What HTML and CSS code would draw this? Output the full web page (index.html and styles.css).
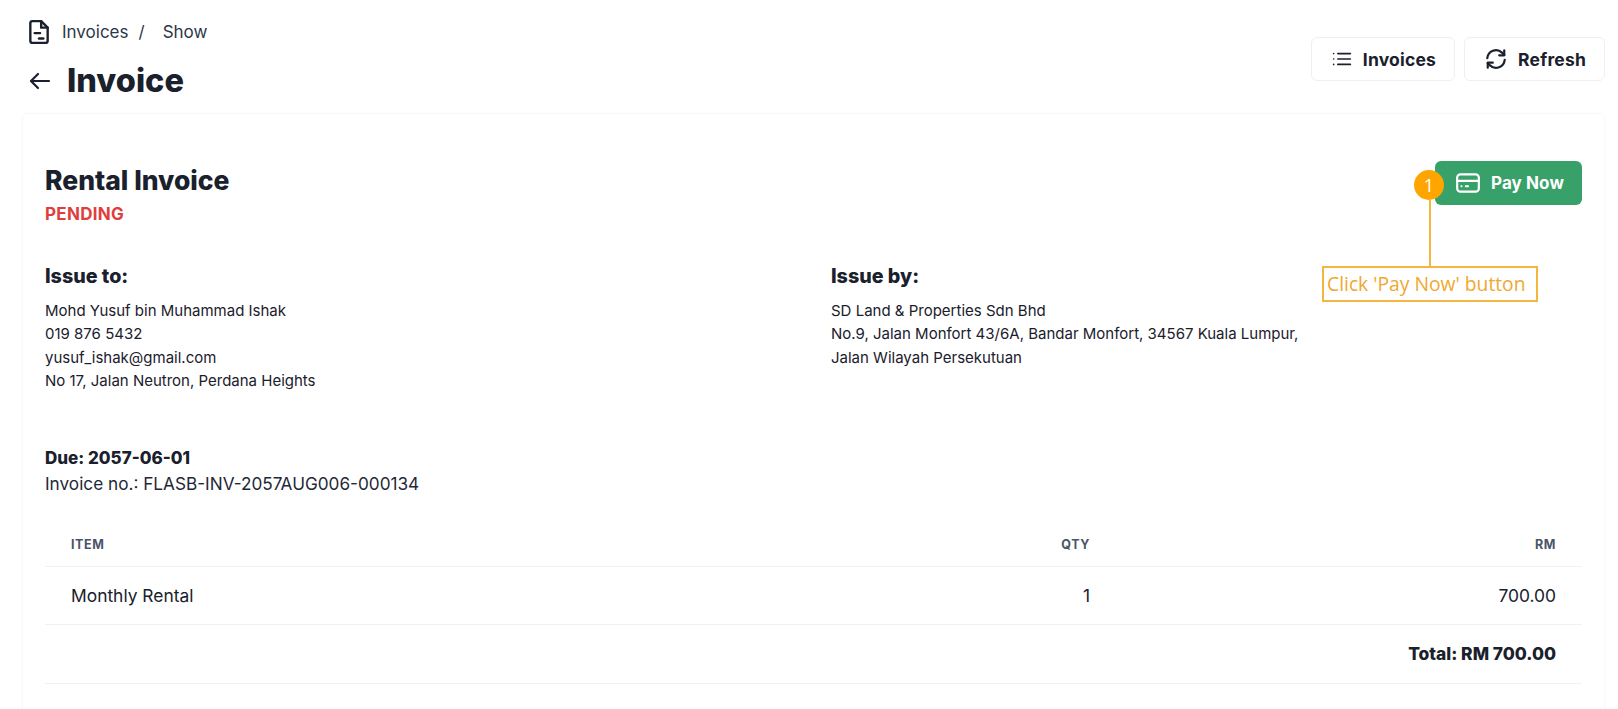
FILE: index.html
```html
<!DOCTYPE html>
<html lang="en">
<head>
<meta charset="utf-8">
<title>Invoice</title>
<link rel="stylesheet" href="styles.css">
</head>
<body>
<header class="top">
  <div class="heading">
    <nav class="crumbs">
      <svg class="crumb-icon" viewBox="0 0 24 24" fill="none" stroke="currentColor" stroke-width="2.200" stroke-linecap="round" stroke-linejoin="round"><path d="M14 2H6a2 2 0 0 0-2 2v16a2 2 0 0 0 2 2h12a2 2 0 0 0 2-2V8z"/><path d="M14 2v6h6"/><path d="M8 13h5"/><path d="M12 18h4"/></svg>
      <span class="crumb">Invoices</span><span class="sep">/</span><span class="crumb">Show</span>
    </nav>
    <div class="title-row">
      <svg class="back" viewBox="0 0 24 24" fill="none" stroke="currentColor" stroke-width="2.200" stroke-linecap="round" stroke-linejoin="round"><path d="M21 12H3.500"/><path d="M10 5l-7 7 7 7"/></svg>
      <h1>Invoice</h1>
    </div>
  </div>
  <div class="actions">
    <a class="btn"><svg class="btn-icon list-icon" viewBox="0 0 24 24" fill="none" stroke="currentColor" stroke-width="2" stroke-linecap="round"><path d="M7 5.500h15M7 12h15M7 18.500h15M2 5.500h.01M2 12h.01M2 18.500h.01"/></svg>Invoices</a>
    <a class="btn"><svg class="btn-icon" viewBox="0 0 24 24" fill="none" stroke="currentColor" stroke-width="2.400" stroke-linecap="round" stroke-linejoin="round"><path d="M2.500 11A9.500 9.500 0 0 1 18.500 5L21 7.500"/><path d="M21 2.500v5.500h-5.500"/><path d="M21.500 13A9.500 9.500 0 0 1 5.500 19L3 16.500"/><path d="M3 21.500v-5.500h5.500"/></svg>Refresh</a>
  </div>
</header>
<main class="card">
  <section class="title-block">
    <div>
      <h2>Rental Invoice</h2>
      <div class="status">PENDING</div>
    </div>
    <a class="pay"><svg class="pay-icon" viewBox="0 0 24 24" fill="none" stroke="currentColor" stroke-width="2" stroke-linecap="round" stroke-linejoin="round"><rect x="2" y="4" width="20" height="16" rx="3"/><path d="M2 10h20"/><path d="M6 15h.01M10 15h2"/></svg>Pay Now</a>
  </section>
  <section class="parties">
    <div class="party">
      <h3>Issue to:</h3>
      <p>Mohd Yusuf bin Muhammad Ishak<br>019 876 5432<br>yusuf_ishak@gmail.com<br>No 17, Jalan Neutron, Perdana Heights</p>
    </div>
    <div class="party">
      <h3>Issue by:</h3>
      <p>SD Land &amp; Properties Sdn Bhd<br>No.9, Jalan Monfort 43/6A, Bandar Monfort, 34567 Kuala Lumpur,<br>Jalan Wilayah Persekutuan</p>
    </div>
  </section>
  <section class="meta">
    <div class="due">Due: 2057-06-01</div>
    <div class="number">Invoice no.: FLASB-INV-2057AUG006-000134</div>
  </section>
  <table class="items">
    <thead><tr><th class="c-item">ITEM</th><th class="c-qty">QTY</th><th class="c-rm">RM</th></tr></thead>
    <tbody><tr><td class="c-item">Monthly Rental</td><td class="c-qty">1</td><td class="c-rm">700.00</td></tr></tbody>
    <tfoot><tr><td colspan="3" class="c-rm">Total: RM 700.00</td></tr></tfoot>
  </table>
</main>
<div class="callout">
  <span class="badge">1</span>
  <span class="stem"></span>
  <span class="note">Click 'Pay Now' button</span>
</div>
</body>
</html>
```
FILE: styles.css
```css
* { box-sizing: border-box; }
html, body { margin: 0; height: 709px; overflow: hidden; }
body { background: #fff; color: #1a202c; font-family: Inter, Roboto, sans-serif; position: relative; }
.top { display: flex; justify-content: space-between; height: 114px; padding: 19px 13px 0 26px; }
.crumbs { display: flex; align-items: center; height: 26px; font-size: 17px; color: #2d3748; }
.crumb-icon { width: 26px; height: 26px; margin-right: 10px; color: #1a202c; }
.sep { margin: 0 18px 0 10px; }
.title-row { display: flex; align-items: center; margin-top: 14px; }
.back { width: 24px; height: 24px; margin: 0 15px 0 2px; }
h1 { margin: 0; font-size: 32.500px; line-height: 44px; font-weight: 800; }
.actions { display: flex; gap: 9px; padding-top: 18px; }
.btn { display: flex; align-items: center; height: 44px; padding: 0 18px 0 20px; border: 1px solid #edf0f3; border-radius: 6px; font-size: 17.500px; letter-spacing: .2px; font-weight: 700; color: #1a202c; }
.btn-icon { width: 22px; height: 22px; margin-right: 11px; }
.list-icon { width: 20px; height: 20px; }
.card { position: relative; height: 600px; margin: 0 14px 0 23px; padding: 49px 22px 0; box-shadow: 0 0 3px rgba(0,0,0,.07); background: #fff; border-radius: 4px 4px 0 0; }
.title-block { display: flex; justify-content: space-between; }
.title-block > .pay { margin-top: -2px; }
h2 { margin: 0; font-size: 26.500px; line-height: 34px; font-weight: 800; }
.status { margin-top: 7px; font-size: 17px; letter-spacing: .3px; line-height: 20px; font-weight: 700; color: #e03e3e; }
.pay { display: flex; align-items: center; height: 44px; width: 147px; padding-left: 20px; border-radius: 6px; background: #38a169; color: #fff; font-size: 17px; letter-spacing: .1px; font-weight: 700; }
.pay-icon { width: 26px; height: 26px; margin-right: 10px; }
.parties { display: grid; grid-template-columns: 786px 1fr; margin-top: 40px; }
h3 { margin: 0; font-size: 19.700px; line-height: 24px; font-weight: 800; }
.party p { margin: 11px 0 0; font-size: 15px; line-height: 23.300px; color: #1a202c; }
.meta { margin-top: 54px; }
.due { font-size: 17px; line-height: 25px; font-weight: 800; }
.number { font-size: 17.200px; line-height: 26px; color: #1f2937; }
.items { width: 100%; margin-top: 26px; border-collapse: collapse; }
.items th { height: 43px; font-size: 12.500px; letter-spacing: .6px; font-weight: 700; color: #4a5568; }
.items td { height: 58px; font-size: 17.400px; color: #1a202c; }
.items tfoot td { height: 59px; }
.items tr { border-bottom: 1px solid #edf2f7; }
.items tfoot td { font-weight: 800; }
.c-item { padding: 0 26px; text-align: left; }
.c-qty { width: 200px; text-align: right; }
.c-rm { padding: 0 26px; width: 491px; text-align: right; }
.callout { position: absolute; left: 1322px; top: 170px; width: 216px; height: 132px; }
.badge { position: absolute; left: 92px; top: 0; width: 30px; height: 30px; border-radius: 50%; background: #ffa500; color: #fff; font: 18px/30px "Open Sans", sans-serif; text-align: center; }
.stem { position: absolute; left: 107px; top: 30px; width: 2px; height: 67px; background: #f4b63f; }
.note { position: absolute; left: 0; top: 96px; width: 216px; height: 36px; border: 2px solid #f4b63f; padding-left: 3px; color: #f0a830; font: 19.300px/32px "Open Sans", sans-serif; white-space: nowrap; }
```
